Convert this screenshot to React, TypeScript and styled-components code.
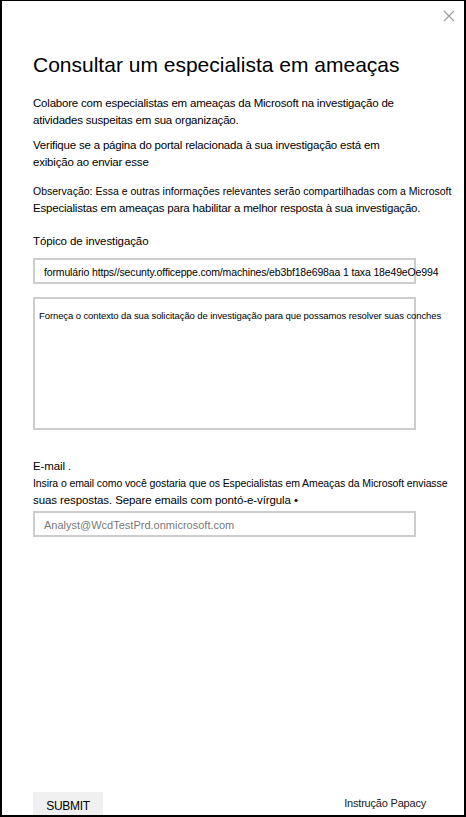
import React from 'react';
import styled, { createGlobalStyle } from 'styled-components';

const GlobalStyle = createGlobalStyle`
  html, body {
    margin: 0;
    padding: 0;
    background: #ffffff;
  }
  * {
    box-sizing: border-box;
  }
`;

// panneau principal avec le cadre noir
const Panel = styled.div`
  position: relative;
  width: 466px;
  height: 817px;
  border: 2px solid #000;
  border-top-width: 1px;
  display: flex;
  flex-direction: column;
  padding: 0 0 0 31px;
  font-family: 'Liberation Sans', Arial, sans-serif;
  color: #000;
  overflow: hidden;
`;

const CloseButton = styled.button`
  position: absolute;
  top: 8px;
  right: 8px;
  width: 14px;
  height: 14px;
  padding: 0;
  border: none;
  background: none;
  display: flex;
  align-items: center;
  justify-content: center;
`;

const Title = styled.h1`
  margin: 50px 0 0;
  font-size: 21px;
  font-weight: 400;
  line-height: 28px;
`;

const Paragraph = styled.p<{ $top: number }>`
  margin: ${(p) => p.$top}px 0 0;
  white-space: nowrap;
`;

// une ligne de texte, avec sa propre taille
const Line = styled.span<{ $size?: number; $spacing?: number }>`
  display: block;
  font-size: ${(p) => p.$size ?? 11.5}px;
  letter-spacing: ${(p) => p.$spacing ?? -0.2}px;
  line-height: 17px;
`;

const Label = styled.div<{ $top: number }>`
  margin: ${(p) => p.$top}px 0 0;
  font-size: 11.5px;
  letter-spacing: -0.1px;
  line-height: 17px;
`;

const Field = styled.div<{ $height: number; $top: number }>`
  margin-top: ${(p) => p.$top}px;
  width: 383px;
  height: ${(p) => p.$height}px;
  border: 2px solid #cdcdcd;
  white-space: nowrap;
  overflow: visible;
`;

const FieldText = styled.div<{ $muted?: boolean; $size: number; $spacing?: number; $pad: string }>`
  padding: ${(p) => p.$pad};
  font-size: ${(p) => p.$size}px;
  letter-spacing: ${(p) => p.$spacing ?? 0}px;
  line-height: 16px;
  color: ${(p) => (p.$muted ? '#7a7a7a' : '#000')};
`;

const Footer = styled.div`
  margin-top: auto;
  display: flex;
  align-items: flex-end;
  justify-content: space-between;
  padding-right: 38px;
`;

const SubmitButton = styled.button`
  width: 70px;
  height: 23px;
  border: none;
  background: #f0f0f0;
  font-family: 'Liberation Sans', Arial, sans-serif;
  font-size: 12px;
  letter-spacing: -0.3px;
  color: #000;
  padding: 5px 0 0;
`;

const Privacy = styled.span`
  font-size: 11px;
  letter-spacing: -0.2px;
  margin-bottom: 6px;
  color: #1a1a1a;
`;

const App: React.FC = () => {
  return (
    <>
      <GlobalStyle />
      <Panel>
        <CloseButton aria-label="Fechar">
          <svg width="12" height="12" viewBox="0 0 12 12">
            <path d="M1 1 L11 11 M11 1 L1 11" stroke="#9a9a9a" strokeWidth="1.1" />
          </svg>
        </CloseButton>
        <Title>Consultar um especialista em ameaças</Title>
        <Paragraph $top={16}>
          <Line>Colabore com especialistas em ameaças da Microsoft na investigação de</Line>
          <Line>atividades suspeitas em sua organização.</Line>
        </Paragraph>
        <Paragraph $top={8}>
          <Line>Verifique se a página do portal relacionada à sua investigação está em</Line>
          <Line>exibição ao enviar esse</Line>
        </Paragraph>
        <Paragraph $top={12}>
          <Line $size={10.5} $spacing={0}>
            Observação: Essa e outras informações relevantes serão compartilhadas com a Microsoft
          </Line>
          <Line>Especialistas em ameaças para habilitar a melhor resposta à sua investigação.</Line>
        </Paragraph>
        <Label $top={16}>Tópico de investigação</Label>
        <Field $top={8} $height={26}>
          <FieldText $size={10.5} $spacing={-0.15} $pad="4px 0 0 9px">
            formulário https//secunty.officeppe.com/machines/eb3bf18e698aa 1 taxa 18e49eOe994
          </FieldText>
        </Field>
        <Field $top={13} $height={133}>
          <FieldText $size={9.5} $spacing={-0.1} $pad="9px 0 0 4px">
            Forneça o contexto da sua solicitação de investigação para que possamos resolver suas conches
          </FieldText>
        </Field>
        <Label $top={28}>E-mail .</Label>
        <Paragraph $top={0}>
          <Line $size={10.5} $spacing={-0.1}>
            Insira o email como você gostaria que os Especialistas em Ameaças da Microsoft enviasse
          </Line>
          <Line $size={11.5} $spacing={-0.1}>
            suas respostas. Separe emails com pontó-e-vírgula •
          </Line>
        </Paragraph>
        <Field $top={2} $height={26}>
          <FieldText $muted $size={11} $pad="4px 0 0 9px">
            Analyst@WcdTestPrd.onmicrosoft.com
          </FieldText>
        </Field>
        <Footer>
          <SubmitButton>SUBMIT</SubmitButton>
          <Privacy>Instrução Papacy</Privacy>
        </Footer>
      </Panel>
    </>
  );
};

export default App;
